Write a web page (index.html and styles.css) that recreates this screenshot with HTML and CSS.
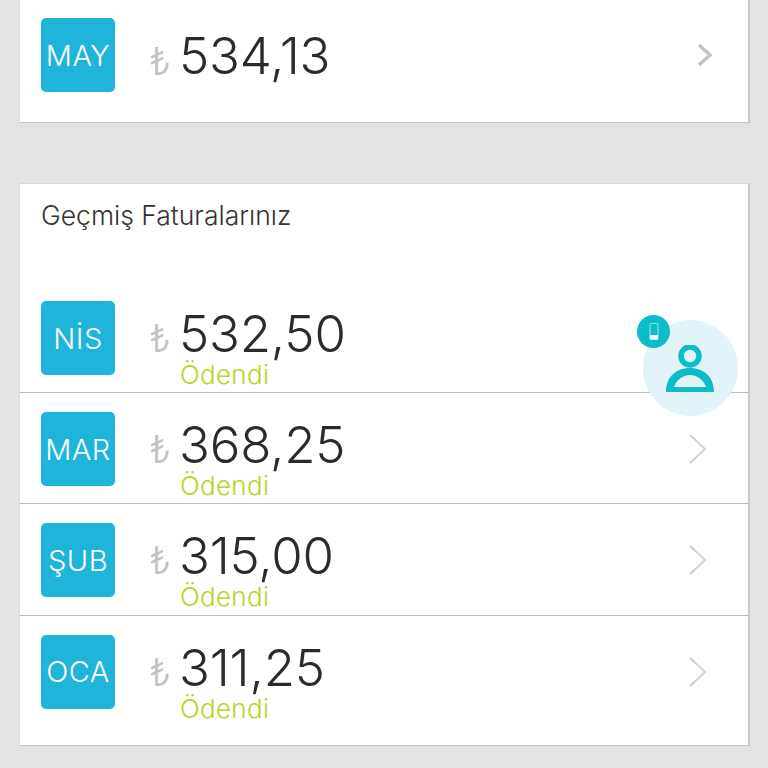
FILE: index.html
```html
<!DOCTYPE html>
<html lang="tr">
<head>
<meta charset="utf-8">
<title>Faturalar</title>
<link rel="stylesheet" href="styles.css">
</head>
<body>
<main class="page">
  <section class="card card-current">
    <div class="row row-current">
      <div class="tile">MAY</div>
      <span class="lira">₺</span>
      <div class="bill"><div class="amount">534,13</div></div>
      <svg class="chev chev-bold" viewBox="0 0 16 24"><path d="M2 2 L13 12 L2 22"/></svg>
    </div>
  </section>
  <section class="card card-past">
    <h2 class="title">Geçmiş Faturalarınız</h2>
    <div class="row">
      <div class="tile">NİS</div>
      <span class="lira">₺</span>
      <div class="bill"><div class="amount">532,50</div><div class="paid">Ödendi</div></div>
    </div>
    <div class="row">
      <div class="tile">MAR</div>
      <span class="lira">₺</span>
      <div class="bill"><div class="amount">368,25</div><div class="paid">Ödendi</div></div>
      <svg class="chev" viewBox="0 0 18 30"><path d="M1 1 L16 15 L1 29"/></svg>
    </div>
    <div class="row">
      <div class="tile">ŞUB</div>
      <span class="lira">₺</span>
      <div class="bill"><div class="amount">315,00</div><div class="paid">Ödendi</div></div>
      <svg class="chev" viewBox="0 0 18 30"><path d="M1 1 L16 15 L1 29"/></svg>
    </div>
    <div class="row row-last">
      <div class="tile">OCA</div>
      <span class="lira">₺</span>
      <div class="bill"><div class="amount">311,25</div><div class="paid">Ödendi</div></div>
      <svg class="chev" viewBox="0 0 18 30"><path d="M1 1 L16 15 L1 29"/></svg>
    </div>
  </section>
</main>
<div class="fab">
  <svg class="fab-user" viewBox="0 0 48 48"><circle cx="24" cy="11" r="9" fill="none" stroke="#0bbcc9" stroke-width="5.5"/><path d="M0 47 C0 32 10 23 24 23 C38 23 48 32 48 47 Z M8 42 H40 C38 35 31 30 24 30 C17 30 10 35 8 42 Z" fill="#0bbcc9" fill-rule="evenodd"/></svg>
  <div class="badge">
    <svg class="badge-phone" viewBox="0 0 10 18"><rect x="1" y="1" width="8" height="16" rx="1.5" fill="none" stroke="#8fe0e6" stroke-width="1.2"/><rect x="1" y="12.5" width="8" height="4.5" fill="#e4f8fa"/></svg>
  </div>
</div>
</body>
</html>
```
FILE: styles.css
```css
* { box-sizing: border-box; }
html, body { margin: 0; height: 768px; overflow: hidden; }
body { background: #e3e3e3; font-family: "Inter", "Noto Sans", sans-serif; color: #333; position: relative; }
.page { padding: 0 18px 0 19px; display: flex; flex-direction: column; gap: 60px; }
.card { background: #fff; border-right: 2px solid #c8c8c8; border-bottom: 1px solid #c4c4c4; border-left: 1px solid #dcdcdc; }
.card-current { height: 123px; }
.card-past { height: 563px; border-top: 1px solid #d6d6d6; display: flex; flex-direction: column; }
.title { margin: 0; height: 98px; padding: 15px 0 0 21px; font-size: 26.5px; line-height: 32px; font-weight: 300; color: #333; }
.row { height: 111.2px; display: flex; align-items: flex-start; padding: 19px 41px 0 21px; border-bottom: 1px solid #bdbdbd; position: relative; }
.row-current { height: 122px; padding-top: 18px; border-bottom: 0; }
.row-last { border-bottom: 0; }
.tile { width: 74px; height: 74px; flex: none; background: #1fb5da; border-radius: 5px; color: #fff; font-size: 29px; font-weight: 300; letter-spacing: 0.5px; display: flex; align-items: center; justify-content: center; }
.lira { width: 30px; margin-left: 34px; padding-top: 14px; font-size: 38px; line-height: 46px; font-weight: 300; color: #c2c2c2; flex: none; }
.row-current .lira { padding-top: 20px; }
.bill { flex: 1; }
.amount { font-size: 51px; line-height: 48px; margin-top: 9px; font-weight: 300; color: #2b2b2b; letter-spacing: -0.2px; }
.row-current .amount { margin-top: 14px; }
.paid { font-size: 26px; line-height: 26px; margin-top: 4px; margin-left: 1px; font-weight: 300; color: #b5d51f; letter-spacing: 0.3px; }
.chev { width: 18px; height: 30px; margin-top: 22px; fill: none; stroke: #d2d2d2; stroke-width: 2; }
.chev-bold { width: 16px; height: 24px; margin: 25px -6px 0 0; stroke: #c4c4c4; stroke-width: 3.5; }
.fab { position: absolute; left: 643px; top: 320px; width: 95px; height: 96px; border-radius: 50%; background: #e2f3fa; }
.fab-user { position: absolute; left: 23px; top: 25px; width: 48px; height: 48px; }
.badge { position: absolute; left: -6px; top: -5px; width: 33px; height: 33px; border-radius: 50%; background: #0bbcc9; display: flex; align-items: center; justify-content: center; }
.badge-phone { width: 10px; height: 19px; }
```
